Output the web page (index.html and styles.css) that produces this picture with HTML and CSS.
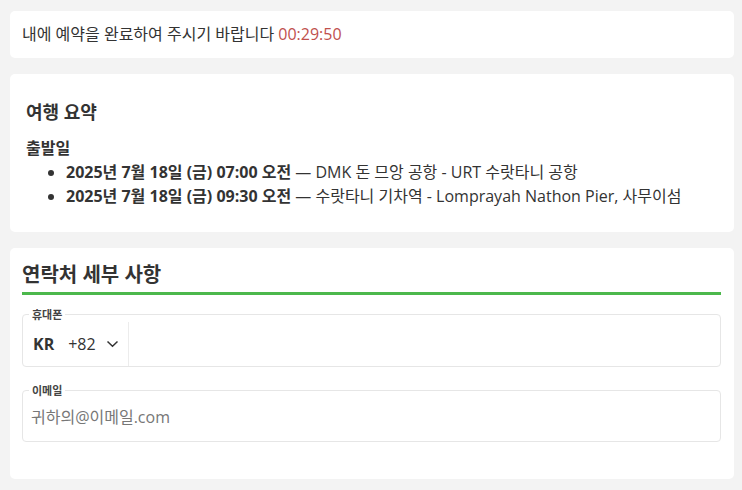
FILE: index.html
```html
<!DOCTYPE html>
<html lang="ko">
  <head>
    <meta charset="UTF-8" />
    <meta name="viewport" content="width=device-width, initial-scale=1.0" />
    <title>예약 완료</title>
    <link rel="stylesheet" href="styles.css">
  </head>
  <body>
    <div class="card timer-card">
      내에 예약을 완료하여 주시기 바랍니다 <span class="timer">00:29:50</span>
    </div>

    <div class="card summary-card">
      <h3>여행 요약</h3>
      <div class="leg-title">출발일</div>
      <ul class="leg-list">
        <li><b>2025년 7월 18일 (금) 07:00 오전</b> — DMK 돈 므앙 공항 - URT 수랏타니 공항</li>
        <li><b>2025년 7월 18일 (금) 09:30 오전</b> — 수랏타니 기차역 - Lomprayah Nathon Pier, 사무이섬</li>
      </ul>
    </div>

    <div class="card contact-card">
      <h2>연락처 세부 사항</h2>

      <fieldset class="field">
        <legend>휴대폰</legend>
        <div class="phone-row">
          <div class="country">
            <span class="code">KR</span>
            <span class="dial">+82</span>
            <svg class="chev" width="13" height="8" viewBox="0 0 13 8">
              <path d="M1.5 1.5 L6.5 6.2 L11.5 1.5" fill="none" stroke="#333" stroke-width="1.5" />
            </svg>
          </div>
          <input type="tel" class="phone-input" />
        </div>
      </fieldset>

      <fieldset class="field">
        <legend>이메일</legend>
        <input type="email" class="email-input" placeholder="귀하의@이메일.com" />
      </fieldset>
    </div>
  </body>
</html>
```

FILE: styles.css
```css
body {
  font-family: "Open Sans", "Noto Sans CJK KR", sans-serif;
  background: #f3f3f3;
  margin: 0;
  padding: 11px 8px 10px 10px;
  color: #333;
}
.card {
  background: white;
  border-radius: 5px;
  margin-bottom: 16px;
}
.timer-card {
  padding: 12px 12px;
  font-size: 16px;
  line-height: 23px;
}
.timer {
  color: #c0504d;
}
.summary-card {
  padding: 23px 16px 24px;
}
.summary-card h3 {
  margin: 0 0 9px;
  font-size: 18px;
  line-height: 30px;
  color: #333;
}
.leg-title {
  font-weight: bold;
  font-size: 16px;
  line-height: 24px;
}
.leg-list {
  margin: 0;
  padding-left: 40px;
  font-size: 16px;
  line-height: 24px;
}
.contact-card {
  padding: 12px 13px 37px 12px;
}
.contact-card h2 {
  margin: 0 0 11px;
  font-size: 20px;
  line-height: 30px;
  padding-bottom: 2px;
  border-bottom: 3px solid #4cb84c;
}
.field {
  margin: 0 0 15px;
  padding: 0;
  border: 1px solid #e6e6e6;
  border-radius: 4px;
}
.field:last-child {
  margin-bottom: 0;
}
.field legend {
  margin-left: 6px;
  padding: 0 3px;
  font-size: 11px;
  font-weight: bold;
  color: #444;
}
.phone-row {
  display: flex;
  height: 44px;
}
.country {
  display: flex;
  align-items: center;
  padding: 0 9px 0 10px;
  border-right: 1px solid #ececec;
  font-size: 16px;
}
.code {
  font-weight: bold;
  margin-right: 14px;
}
.dial {
  margin-right: 10px;
}
.phone-input,
.email-input {
  flex: 1;
  border: none;
  outline: none;
  font: inherit;
  font-size: 16px;
  background: transparent;
}
.email-input {
  display: block;
  width: 100%;
  box-sizing: border-box;
  height: 43px;
  padding: 0 8px 6px;
}
.email-input::placeholder {
  color: #777;
}
```
